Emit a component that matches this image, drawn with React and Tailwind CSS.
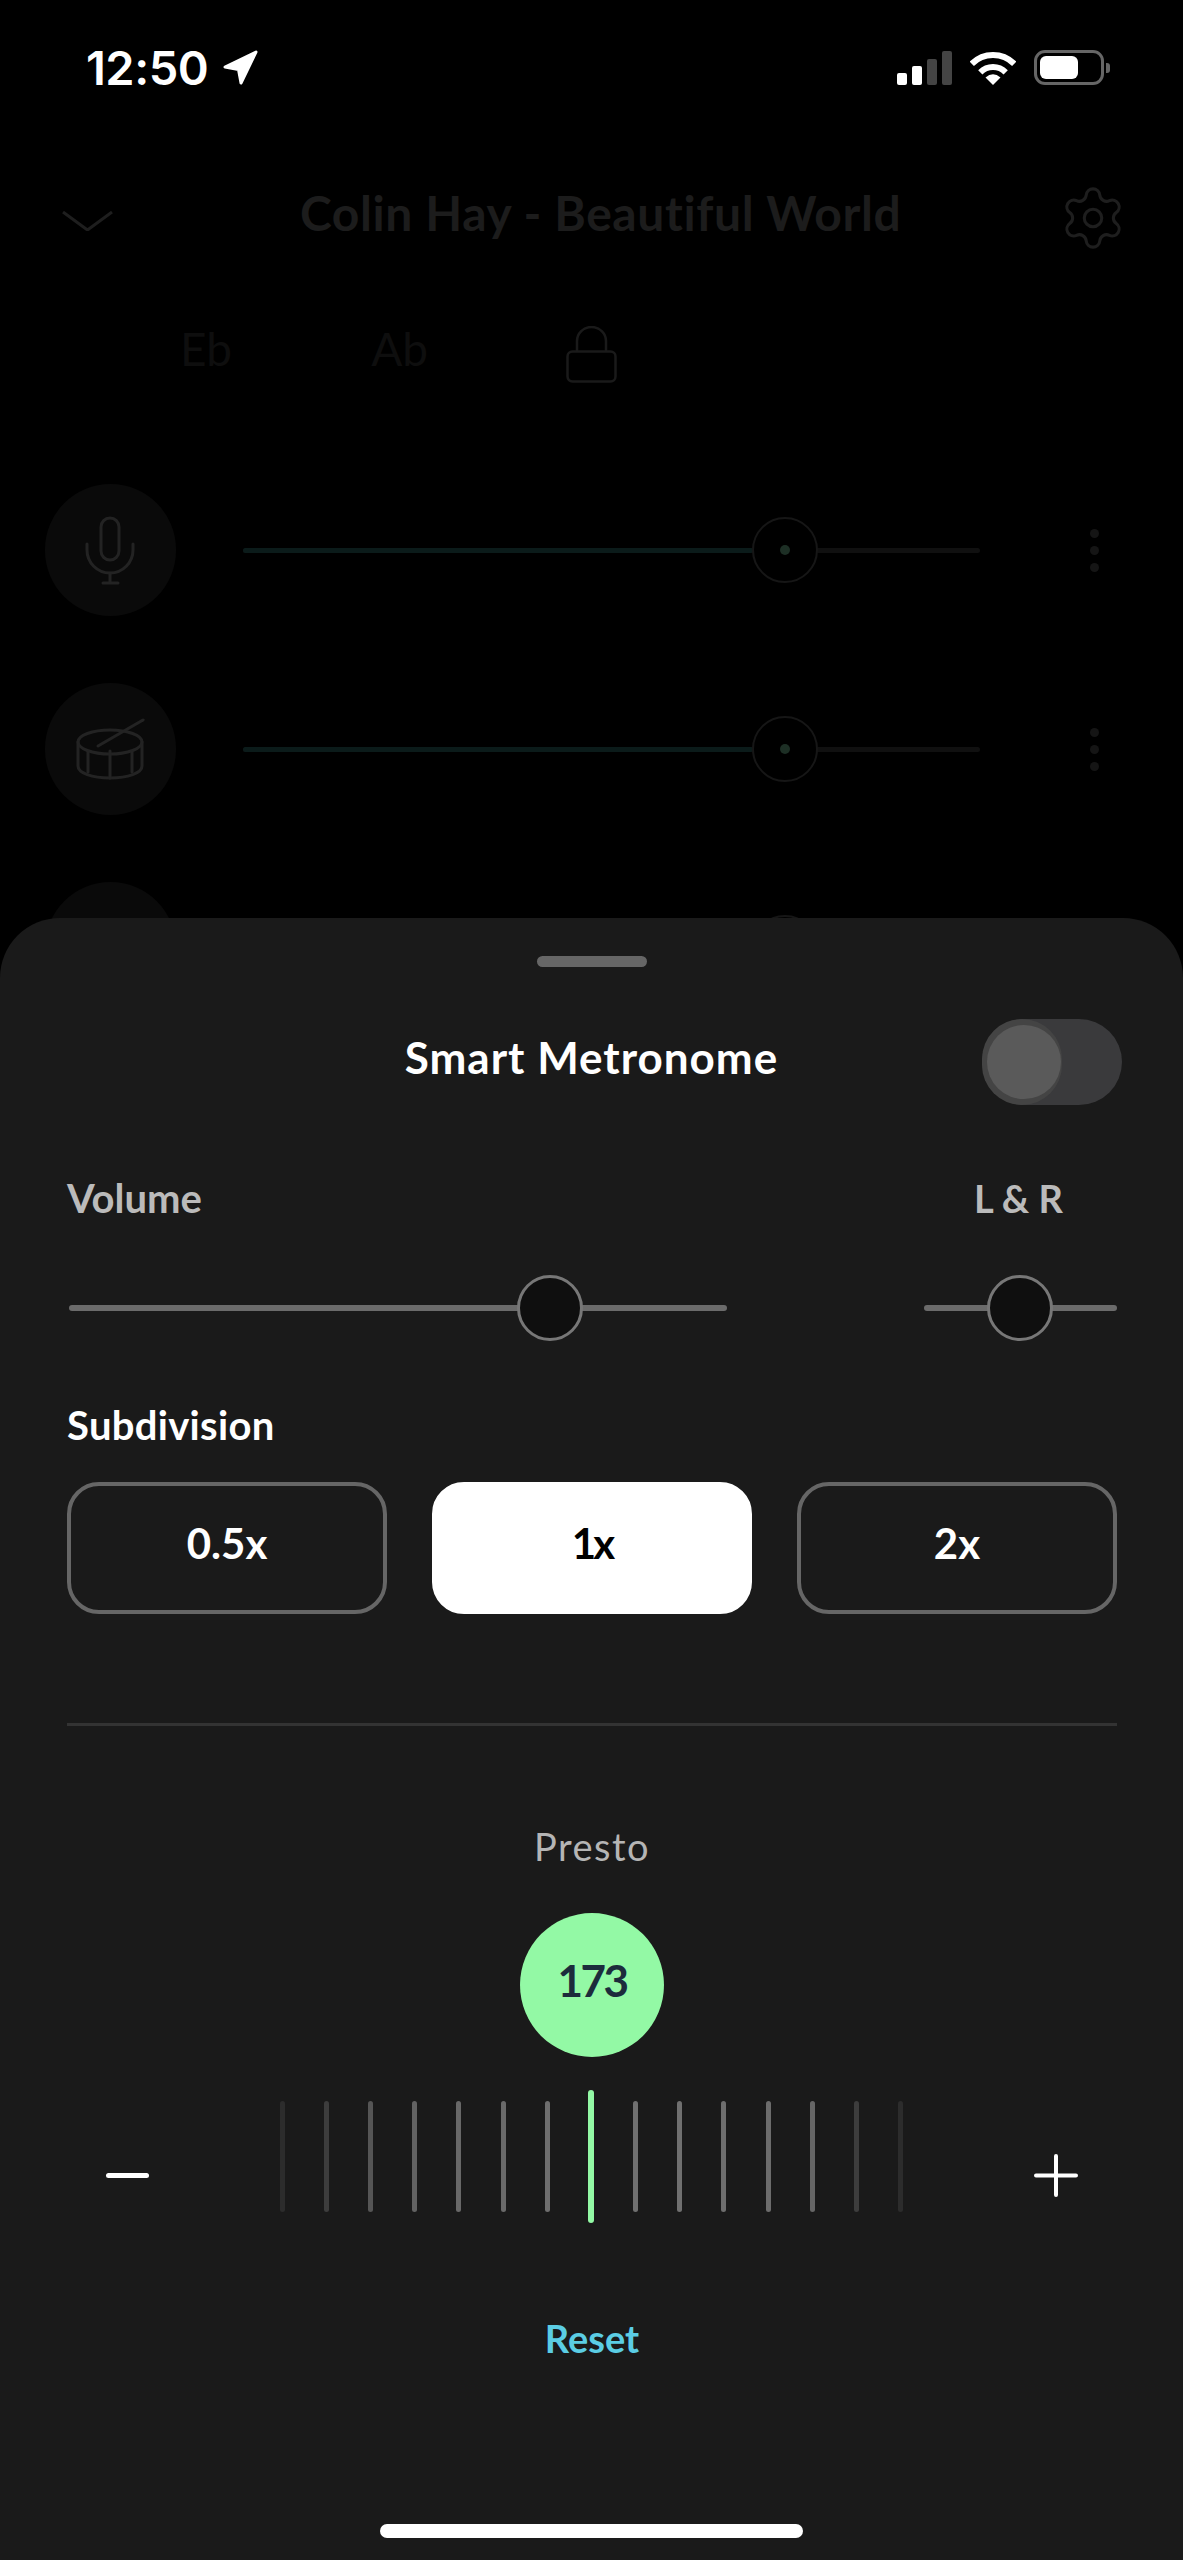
import React from "react";
import { Settings } from "lucide-react";

const tickColors = [
  "bg-[#2c2c2c]",
  "bg-[#3d3d3d]",
  "bg-[#555555]",
  "bg-[#626262]",
  "bg-[#686868]",
  "bg-[#6a6a6a]",
  "bg-[#6e6e6e]",
  "bg-[#93f9a5]",
  "bg-[#707070]",
  "bg-[#707070]",
  "bg-[#6e6e6e]",
  "bg-[#6c6c6c]",
  "bg-[#666666]",
  "bg-[#3d3d3d]",
  "bg-[#2c2c2c]",
];

const StatusBar = () => (
  <div className="flex h-[35px] items-center pl-[86px] text-white">
    <span className="font-['Inter'] text-[47px] leading-[35px] font-semibold tracking-[-0.5px]">12:50</span>
    <svg className="ml-[14px]" width="36" height="36" viewBox="0 0 36 36">
      <path d="M3 17 L34 2 L19 33 L16.5 19.5 Z" fill="#fff" stroke="#fff" strokeWidth="3" strokeLinejoin="round" />
    </svg>

    {/* signal */}
    <div className="ml-[639px] flex h-[34px] items-end gap-[5px]">
      <div className="h-[12px] w-[10px] rounded-[2px] bg-white" />
      <div className="h-[19px] w-[10px] rounded-[2px] bg-white" />
      <div className="h-[26px] w-[10px] rounded-[2px] bg-[#444444]" />
      <div className="h-[34px] w-[10px] rounded-[2px] bg-[#444444]" />
    </div>

    {/* wifi */}
    <svg className="ml-[18px]" width="46" height="34" viewBox="0 0 46 34" fill="none">
      <path d="M1.8 12.8 A30 30 0 0 1 44.2 12.8" stroke="#fff" strokeWidth="6" />
      <path d="M10.3 21.3 A18 18 0 0 1 35.7 21.3" stroke="#fff" strokeWidth="6" />
      <path d="M23 34 L15.5 26.5 Q23 20 30.5 26.5 Z" fill="#fff" />
    </svg>

    {/* battery */}
    <div className="ml-[18px] flex h-[35px] w-[70px] items-center rounded-[11px] border-[3px] border-[#666666] p-[3px]">
      <div className="h-full w-[38px] rounded-[6px] bg-white" />
    </div>
    <div className="ml-[2px] h-[10px] w-[4px] rounded-r-[3px] bg-[#666666]" />
  </div>
);

const MicIcon = () => (
  <svg width="131" height="132" viewBox="45 484 131 132" fill="none" stroke="#232323" strokeWidth="3" strokeLinecap="round">
    <rect x="101" y="518" width="18" height="42" rx="9" />
    <path d="M87 544 v6 a23 23 0 0 0 46 0 v-6" />
    <path d="M110 573 v10 M103 583 h15" />
  </svg>
);

const DrumIcon = () => (
  <svg width="131" height="132" viewBox="45 683 131 132" fill="none" stroke="#232323" strokeWidth="3" strokeLinecap="round" strokeLinejoin="round">
    <ellipse cx="110" cy="742" rx="32" ry="12" />
    <path d="M78 742 v24 c0 7 14 12 32 12 s32 -5 32 -12 v-24" />
    <path d="M98 746 L143 720" />
    <path d="M110 751 v27 M88 752 v20 M132 752 v20" />
  </svg>
);

const ChannelRow = ({ icon, className }) => (
  <div className={`flex items-center pl-[45px] ${className}`}>
    <div className="h-[132px] w-[131px] rounded-full bg-[#0a0a0a]">{icon}</div>
    <div className="relative ml-[67px] h-[5px] w-[737px] rounded-full bg-[#101010]">
      <div className="h-full w-[510px] rounded-full bg-[#0b1b1a]" />
      <div className="absolute top-[-31px] left-[509px] flex h-[66px] w-[66px] items-center justify-center rounded-full border-2 border-[#161616] bg-black">
        <div className="h-[10px] w-[10px] rounded-full bg-[#1d2f25]" />
      </div>
    </div>
    <div className="ml-[110px] flex flex-col gap-[8px]">
      <div className="h-[9px] w-[9px] rounded-full bg-[#151515]" />
      <div className="h-[9px] w-[9px] rounded-full bg-[#151515]" />
      <div className="h-[9px] w-[9px] rounded-full bg-[#151515]" />
    </div>
  </div>
);

const MixerBackground = () => (
  <div>
    {/* header */}
    <div className="mt-[99px] flex h-[63px] items-start pl-[62px]">
      <svg className="mt-[27px]" width="51" height="20" viewBox="0 0 51 20" fill="none" stroke="#1e1e1e" strokeWidth="3">
        <path d="M1 1 L25.5 19 L50 1" />
      </svg>
      <span className="ml-[187px] text-[48px] leading-[58px] font-bold tracking-[0.6px] whitespace-nowrap text-[#1c1c1c]">
        Colin Hay - Beautiful World
      </span>
      <Settings className="-mt-[1px] ml-[157px] text-[#1e1e1e]" size={70} strokeWidth={1.05} />
    </div>

    {/* keys */}
    <div className="mt-[79px] flex h-[57px] items-start pl-[180px] text-[46px] leading-[46px] text-[#0e0e0e]">
      <span>Eb</span>
      <span className="ml-[139px]">Ab</span>
      <svg className="ml-[138px]" width="51" height="57" viewBox="0 0 51 57" fill="none" stroke="#1a1a1a" strokeWidth="2.5">
        <rect x="1.5" y="25.5" width="48" height="30" rx="5" />
        <path d="M11 25 V15 a14.5 14 0 0 1 29 0 V25" />
      </svg>
    </div>

    {/* channels */}
    <ChannelRow className="mt-[101px]" icon={<MicIcon />} />
    <ChannelRow className="mt-[67px]" icon={<DrumIcon />} />
    <ChannelRow className="mt-[67px]" />
  </div>
);

const Slider = ({ width, thumbLeft, className }) => (
  <div className={`flex h-[66px] items-center ${className}`} style={{ width }}>
    <div className="relative h-[6px] w-full rounded-full bg-[#6b6b6b]">
      <div
        className="absolute top-[-30px] h-[66px] w-[66px] rounded-full border-[3px] border-[#777777] bg-[#0f0f0f]"
        style={{ left: thumbLeft }}
      />
    </div>
  </div>
);

const SubdivisionButton = ({ label, active }) => (
  <div
    className={`flex h-[132px] items-center justify-center rounded-[32px] border-[4px] pb-[10px] text-[42px] font-bold ${
      active ? "border-white bg-white tracking-[-3px] text-black" : "border-[#666666] text-white"
    }`}
  >
    {label}
  </div>
);

const MetronomeSheet = () => (
  <div className="absolute inset-x-0 top-[918px] bottom-0 rounded-t-[60px] bg-[#1a1a1a]">
    <div className="mx-auto mt-[38px] h-[11px] w-[110px] rounded-full bg-[#666666]" />

    {/* title + toggle */}
    <div className="mt-[52px] grid grid-cols-[1fr_auto_1fr] items-center pr-[61px] pl-[61px]">
      <div />
      <div className="-translate-y-[5px] text-[44px] leading-[50px] font-bold tracking-[1px] whitespace-nowrap text-white">
        Smart Metronome
      </div>
      <div className="relative h-[86px] w-[140px] justify-self-end rounded-full bg-[#3a3a3c]">
        <div className="absolute top-0 left-0 h-[86px] w-[80px] rounded-full bg-[#444444]" />
        <div className="absolute top-[6px] left-[5px] h-[74px] w-[74px] rounded-full bg-[#5a5a5a]" />
      </div>
    </div>

    <div className="pr-[66px] pl-[67px]">
      <div className="mt-[73px] flex justify-between text-[40px] leading-[40px] font-bold text-[#bbbbbb]">
        <span>Volume</span>
        <span className="mr-[54px] text-[38px]">L &amp; R</span>
      </div>

      <div className="mt-[57px] flex justify-between">
        <Slider width={658} thumbLeft={448} className="ml-[2px]" />
        <Slider width={193} thumbLeft={63} />
      </div>

      <div className="mt-[64px] text-[40px] leading-[40px] font-bold tracking-[0.3px] text-white">Subdivision</div>

      <div className="mt-[37px] grid grid-cols-3 gap-[45px]">
        <SubdivisionButton label="0.5x" />
        <SubdivisionButton label="1x" active />
        <SubdivisionButton label="2x" />
      </div>

      <div className="mt-[109px] h-[3px] bg-[#333333]" />

      <div className="mt-[100px] text-center text-[38px] leading-[40px] tracking-[1.5px] text-[#b5b5b5]">Presto</div>

      <div className="mx-auto mt-[47px] flex h-[144px] w-[144px] items-center justify-center rounded-full bg-[#93f9a5] pb-[10px] text-[44px] font-bold tracking-[-2.5px] text-[#1c2c3c]">
        173
      </div>

      {/* tempo ruler */}
      <div className="mt-[33px] flex h-[133px] items-start">
        <div className="mt-[83px] ml-[39px] h-[5px] w-[43px] rounded-full bg-white" />
        <div className="ml-[111px] flex h-full items-center">
          {tickColors.map((color, i) => (
            <div key={i} className="flex w-[44.2px] justify-center">
              <div className={i === 7 ? `h-[133px] w-[6px] rounded-full ${color}` : `h-[111px] w-[5px] rounded-full ${color}`} />
            </div>
          ))}
        </div>
        <svg className="mt-[64px] ml-[111px]" width="44" height="43" viewBox="0 0 44 43" fill="none" stroke="#fff" strokeWidth="4" strokeLinecap="round">
          <path d="M2 21.5 H42 M22 2 V41" />
        </svg>
      </div>

      <div className="mt-[95px] text-center text-[38px] leading-[40px] font-bold text-[#5bcde4]">Reset</div>
    </div>

    <div className="mx-auto mt-[166px] h-[14px] w-[423px] rounded-full bg-white" />
  </div>
);

export default function App() {
  return (
    <div className="relative h-[2560px] w-[1183px] overflow-hidden bg-black pt-[50px] font-['Lato',sans-serif]">
      <StatusBar />
      <MixerBackground />
      <MetronomeSheet />
    </div>
  );
}
